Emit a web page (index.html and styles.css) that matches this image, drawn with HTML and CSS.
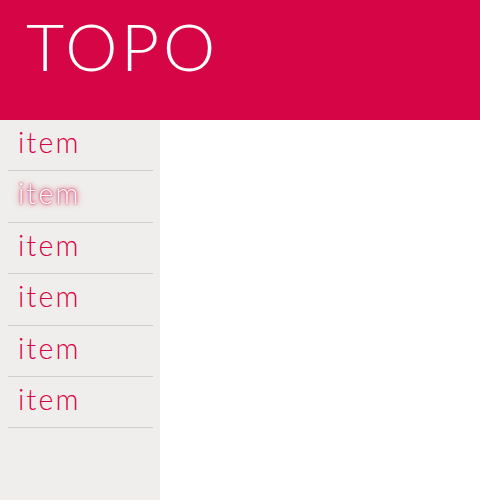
FILE: index.html
```html
<!DOCTYPE html>
<html>
<head>
<meta charset="utf-8">
<link rel="stylesheet" href="styles.css">
</head>
<body>
<header class="topo"><h1 class="title">TOPO</h1></header>
<div class="main">
  <nav class="sidebar">
    <ul class="menu">
      <li class="item">item</li>
      <li class="item item-hover">item</li>
      <li class="item">item</li>
      <li class="item">item</li>
      <li class="item">item</li>
      <li class="item">item</li>
    </ul>
  </nav>
  <section class="content"></section>
</div>
</body>
</html>
```
FILE: styles.css
```css
html, body { margin: 0; padding: 0; height: 100%; }
body { font-family: Lato, "Open Sans", sans-serif; background: #fff; display: flex; flex-direction: column; }
.topo { height: 120px; background: #d60646; flex: none; }
.title { margin: 0; padding: 10px 0 0 26px; font-weight: 300; font-size: 66px; line-height: 72px; color: #fff; letter-spacing: 3.7px; }
.main { flex: 1; display: flex; }
.sidebar { width: 160px; background: #efeeec; }
.menu { list-style: none; margin: 0; padding: 0 7px 0 8px; }
.item { height: 50.4px; border-bottom: 1px solid #cfcecc; color: #d9003f; font-size: 28.5px; font-weight: 300; line-height: 45px; padding-left: 10px; letter-spacing: 2.2px; }
.item-hover { color: #fff; text-shadow: 0 0 2px #d60646, 0 0 5px rgba(214, 6, 70, 0.7), 0 0 8px rgba(214, 6, 70, 0.4); }
.content { flex: 1; }
```
